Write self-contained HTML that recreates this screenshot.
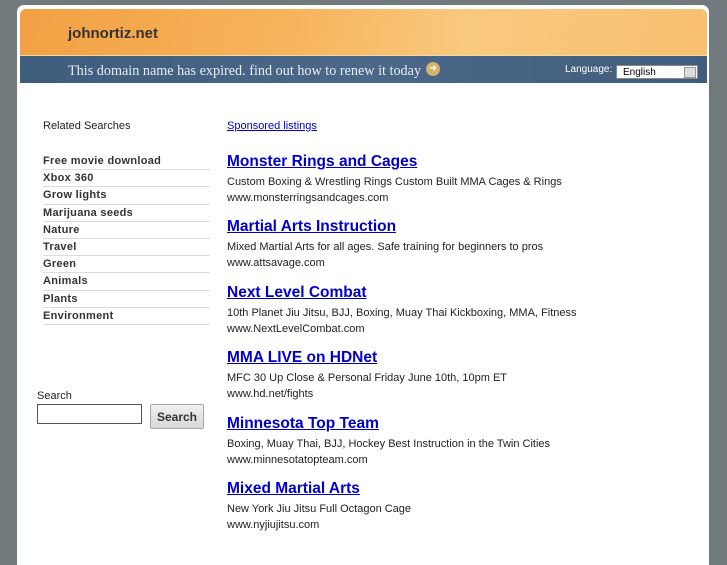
<!DOCTYPE html>
<html><head><style>
body{margin:0;background:#707a7c;width:727px;height:545px;overflow:hidden;font-family:"Liberation Sans",sans-serif;position:relative}
#panel{position:absolute;left:17px;top:5px;width:692px;height:560px;background:#fff;border-radius:7px 7px 0 0}
#hdr{position:absolute;left:20px;top:9px;width:687px;height:46px;border-radius:6px 6px 0 0;background:linear-gradient(100deg,#f3a043 0%,#f7b45c 40%,#f9c97e 65%,#f8c070 100%)}
#hdr .t{position:absolute;left:48px;top:16px;font-size:15px;font-weight:bold;color:#333}
#bar{position:absolute;left:20px;top:55px;width:687px;height:27px;background:linear-gradient(90deg,#3f5c7c,#4c6889 50%,#405d7d);border-top:1px solid #f3d9a6}
#bar .m{position:absolute;left:48px;top:7px;font-family:"Liberation Serif",serif;font-size:14.2px;color:#e8ecf0;white-space:nowrap}
#bar .ic{position:absolute;left:406px;top:6px;width:14px;height:14px;border-radius:50%;background:#d4b26a;color:#fff;font-size:10px;text-align:center;line-height:14px}
#bar .l{position:absolute;left:545px;top:8px;font-size:10px;color:#fff}
#bar .s{position:absolute;left:596px;top:9px;height:14px;background:#fff;border:1px solid #888;font-size:10px;line-height:14px;padding-left:6px;box-sizing:border-box;width:82px}
#bar .s i{position:absolute;right:1px;top:1px;width:10px;height:9px;background:#ddd;border:1px solid #999}
.rs{position:absolute;left:43px;top:120px;font-size:11px;color:#222}
ul{position:absolute;left:43px;top:153px;margin:0;padding:0;list-style:none;width:167px}
li{font-size:11px;font-weight:bold;color:#333;height:16.2px;line-height:16px;border-bottom:1px solid #ddd;letter-spacing:.3px}
.sl{position:absolute;left:37px;top:390px;font-size:11px;color:#222}
.in{position:absolute;left:37px;top:404px;width:105px;height:20px;border:1px solid #555;box-sizing:border-box}
.bt{position:absolute;left:150px;top:404px;width:54px;height:25px;border:1px solid #aaa;border-radius:2px;background:linear-gradient(#f0f0f0,#d8d8d8);font-size:12px;font-weight:bold;color:#333;text-align:center;line-height:24px;box-sizing:border-box}
.sp{position:absolute;left:227px;top:120px;font-size:11px;color:#00c;text-decoration:underline}
.ad{position:absolute;left:227px;font-size:11px;color:#222}
.ad a{display:block;font-size:15.5px;font-weight:bold;color:#00c;text-decoration:underline;height:21px}
.ad div{height:16px;line-height:16px}
</style></head><body>
<div id="panel"></div>
<div id="hdr"><span class="t">johnortiz.net</span></div>
<div id="bar"><span class="m">This domain name has expired. find out how to renew it today</span><span class="ic">➜</span><span class="l">Language:</span><span class="s">English<i></i></span></div>
<div class="rs">Related Searches</div>
<ul><li>Free movie download</li><li>Xbox 360</li><li>Grow lights</li><li>Marijuana seeds</li><li>Nature</li><li>Travel</li><li>Green</li><li>Animals</li><li>Plants</li><li>Environment</li></ul>
<div class="sl">Search</div><div class="in"></div><div class="bt">Search</div>
<div class="sp">Sponsored listings</div>
<div class="ad" style="top:153px"><a>Monster Rings and Cages</a><div>Custom Boxing &amp; Wrestling Rings Custom Built MMA Cages &amp; Rings</div><div>www.monsterringsandcages.com</div></div>
<div class="ad" style="top:218px"><a>Martial Arts Instruction</a><div>Mixed Martial Arts for all ages. Safe training for beginners to pros</div><div>www.attsavage.com</div></div>
<div class="ad" style="top:284px"><a>Next Level Combat</a><div>10th Planet Jiu Jitsu, BJJ, Boxing, Muay Thai Kickboxing, MMA, Fitness</div><div>www.NextLevelCombat.com</div></div>
<div class="ad" style="top:349px"><a>MMA LIVE on HDNet</a><div>MFC 30 Up Close &amp; Personal Friday June 10th, 10pm ET</div><div>www.hd.net/fights</div></div>
<div class="ad" style="top:415px"><a>Minnesota Top Team</a><div>Boxing, Muay Thai, BJJ, Hockey Best Instruction in the Twin Cities</div><div>www.minnesotatopteam.com</div></div>
<div class="ad" style="top:480px"><a>Mixed Martial Arts</a><div>New York Jiu Jitsu Full Octagon Cage</div><div>www.nyjiujitsu.com</div></div>
</body></html>
